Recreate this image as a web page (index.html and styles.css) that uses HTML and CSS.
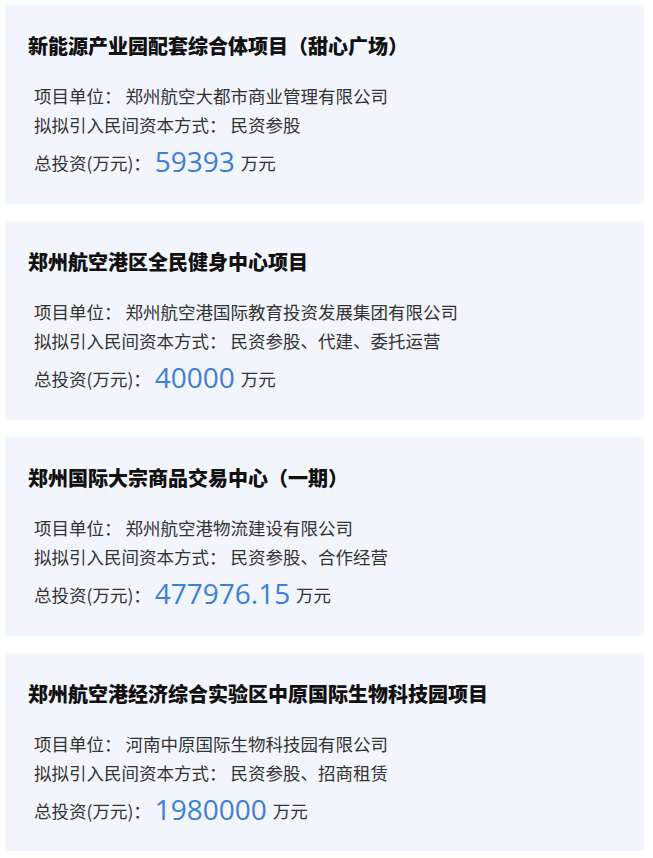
FILE: index.html
```html
<!DOCTYPE html>
<html lang="zh-CN">
<head>
    <meta charset="UTF-8">
    <meta name="viewport" content="width=device-width, initial-scale=1.0">
    <title>项目列表</title>
    <link rel="stylesheet" href="styles.css">
</head>
<body>
    <div class="list">
        <div class="card">
            <h2 class="title">新能源产业园配套综合体项目（甜心广场）</h2>
            <div class="info">
                <p class="row">项目单位： 郑州航空大都市商业管理有限公司</p>
                <p class="row">拟拟引入民间资本方式： 民资参股</p>
                <p class="total">总投资(万元)： <span class="amount">59393</span> 万元</p>
            </div>
        </div>

        <div class="card">
            <h2 class="title">郑州航空港区全民健身中心项目</h2>
            <div class="info">
                <p class="row">项目单位： 郑州航空港国际教育投资发展集团有限公司</p>
                <p class="row">拟拟引入民间资本方式： 民资参股、代建、委托运营</p>
                <p class="total">总投资(万元)： <span class="amount">40000</span> 万元</p>
            </div>
        </div>

        <div class="card">
            <h2 class="title">郑州国际大宗商品交易中心（一期）</h2>
            <div class="info">
                <p class="row">项目单位： 郑州航空港物流建设有限公司</p>
                <p class="row">拟拟引入民间资本方式： 民资参股、合作经营</p>
                <p class="total">总投资(万元)： <span class="amount">477976.15</span> 万元</p>
            </div>
        </div>

        <div class="card">
            <h2 class="title">郑州航空港经济综合实验区中原国际生物科技园项目</h2>
            <div class="info">
                <p class="row">项目单位： 河南中原国际生物科技园有限公司</p>
                <p class="row">拟拟引入民间资本方式： 民资参股、招商租赁</p>
                <p class="total">总投资(万元)： <span class="amount">1980000</span> 万元</p>
            </div>
        </div>
    </div>
</body>
</html>
```

FILE: styles.css
```css
body {
    margin: 0;
    padding: 6px 10px 0 6px;
    background-color: #ffffff;
    font-family: "Noto Sans CJK SC", "Noto Sans", sans-serif;
    color: #333333;
}

.list {
    display: flex;
    flex-direction: column;
    gap: 19px;
}

.card {
    background-color: #f2f5fc;
    box-shadow: 0 0 3px rgba(230, 234, 244, 0.9);
    height: 197px;
    box-sizing: border-box;
    padding: 27px 0 0 22px;
}

.title {
    margin: 0;
    font-size: 20px;
    line-height: 26px;
    font-weight: 900;
    color: #111111;
}

.info {
    margin-top: 22px;
    padding-left: 6px;
}

.row {
    margin: 0;
    font-size: 17.5px;
    line-height: 29px;
    color: #333333;
}

.total {
    margin: 4px 0 0;
    font-size: 17.5px;
    line-height: 36px;
    color: #333333;
}

.amount {
    font-family: "Open Sans", "Noto Sans", sans-serif;
    font-size: 28px;
    color: #3b7fd6;
    vertical-align: -2px;
    margin-right: 2px;
}
```
